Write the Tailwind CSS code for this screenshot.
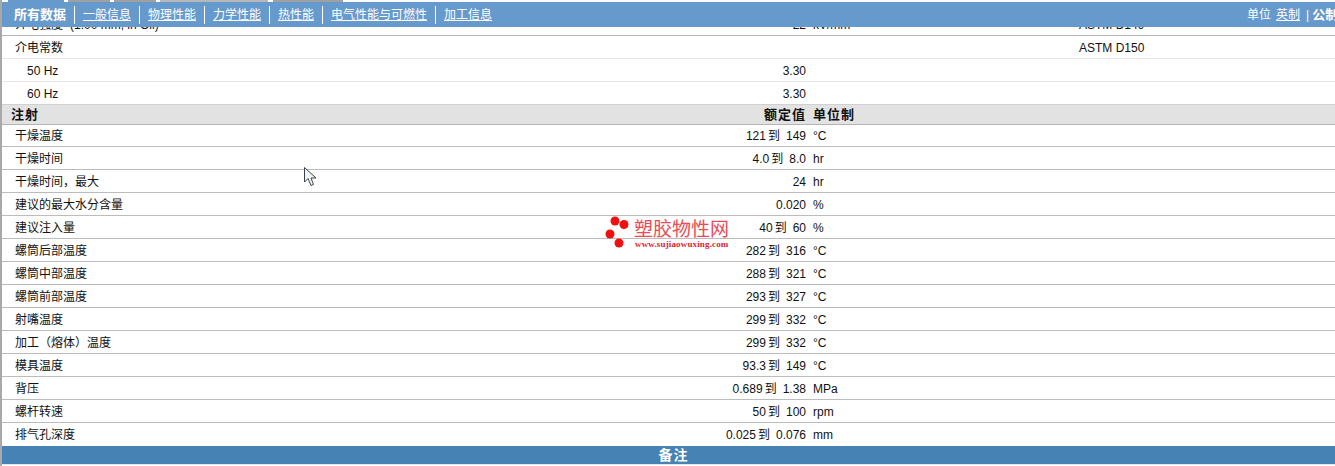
<!DOCTYPE html>
<html lang="zh">
<head>
  <meta charset="UTF-8">
  <title>塑胶物性</title>
  <script src="https://cdn.jsdelivr.net/npm/@tailwindcss/browser@4"></script>
</head>
<body class="h-[466px] w-[1335px] overflow-hidden bg-white text-[12px] text-[#111] font-['Liberation_Sans','Noto_Sans_CJK_SC',sans-serif]">
  <div class="relative h-[466px] overflow-hidden border-l-2 border-[#a8a8a8]">
    <!-- 顶部导航 -->
    <div class="h-[2px] flex -ml-[2px] pl-[8px] bg-white">
      <div class="w-[56px] bg-[#6699cc]"></div>
      <div class="w-[42px] ml-[4px] bg-[#a0a0a0]"></div>
      <div class="w-[42px] ml-[4px] bg-[#a0a0a0]"></div>
      <div class="w-[108px] ml-[4px] bg-[#b8b8b8]"></div>
      <div class="w-[70px] ml-[5px] bg-[#a0a0a0]"></div>
    </div>
    <div class="h-[25px] -ml-[2px] bg-[#6699cc] text-white flex items-center justify-between relative z-10">
      <nav class="flex items-center pl-[14px]">
        <span class="font-bold text-[13px] pr-[8px]">所有数据</span>
        <a class="border-l border-white px-[8px] underline">一般信息</a>
        <a class="border-l border-white px-[8px] underline">物理性能</a>
        <a class="border-l border-white px-[8px] underline">力学性能</a>
        <a class="border-l border-white px-[8px] underline">热性能</a>
        <a class="border-l border-white px-[8px] underline">电气性能与可燃性</a>
        <a class="border-l border-white px-[8px] underline">加工信息</a>
      </nav>
      <div class="flex items-center whitespace-nowrap w-[88px] overflow-hidden shrink-0">
        <span>单位</span><a class="underline ml-[5px]">英制</a><span class="ml-[6px]">|</span><b class="ml-[3px] text-[13px]">公制</b>
      </div>
    </div>

    <!-- 上一节（被导航遮住） -->
    <div class="h-[9px] overflow-hidden border-b border-[#b4b4b4] relative">
      <div class="grid grid-cols-[560px_244px_273px_1fr] absolute left-0 right-0 -top-[14px] h-[23px] items-center">
        <span class="pl-[13px]">介电强度<span class="ml-[7px]">(1.00 mm, in Oil)</span></span><span class="text-right">22</span><span class="pl-[7px]">kV/mm</span><span>ASTM D149</span>
      </div>
    </div>

    <div class="grid grid-cols-[560px_244px_273px_1fr] h-[23px] pt-[1px] items-center border-b border-[#e8e8e8]">
      <span class="pl-[13px]">介电常数</span><span></span><span></span><span>ASTM D150</span>
    </div>
    <div class="grid grid-cols-[560px_244px_273px_1fr] h-[23px] pt-[1px] items-center border-b border-[#e8e8e8]">
      <span class="pl-[25px]">50 Hz</span><span class="text-right">3.30</span>
    </div>
    <div class="grid grid-cols-[560px_244px_273px_1fr] h-[23px] pt-[1px] items-center border-b border-[#d0d0d0]">
      <span class="pl-[25px]">60 Hz</span><span class="text-right">3.30</span>
    </div>

    <!-- 注射 -->
    <div class="grid grid-cols-[560px_244px_273px_1fr] h-[20px] items-center bg-[#e2e2e2] border-b border-[#b4b4b4] font-bold text-[13px] tracking-[1px]">
      <span class="pl-[9px]">注射</span><span class="text-right whitespace-nowrap">额定值</span><span class="pl-[7px]">单位制</span>
    </div>

    <div class="divide-y divide-[#bcbcbc]">
      <div class="grid grid-cols-[560px_244px_1fr] h-[22px] items-center"><span class="pl-[13px]">干燥温度</span><span class="text-right">121<span class="ml-[2px] mr-[6px]">到</span>149</span><span class="pl-[7px]">°C</span></div>
      <div class="grid grid-cols-[560px_244px_1fr] h-[23px] pt-[1px] items-center"><span class="pl-[13px]">干燥时间</span><span class="text-right">4.0<span class="ml-[2px] mr-[6px]">到</span>8.0</span><span class="pl-[7px]">hr</span></div>
      <div class="grid grid-cols-[560px_244px_1fr] h-[23px] pt-[1px] items-center"><span class="pl-[13px]">干燥时间，最大</span><span class="text-right">24</span><span class="pl-[7px]">hr</span></div>
      <div class="grid grid-cols-[560px_244px_1fr] h-[23px] pt-[1px] items-center"><span class="pl-[13px]">建议的最大水分含量</span><span class="text-right">0.020</span><span class="pl-[7px]">%</span></div>
      <div class="grid grid-cols-[560px_244px_1fr] h-[23px] pt-[1px] items-center"><span class="pl-[13px]">建议注入量</span><span class="text-right">40<span class="ml-[2px] mr-[6px]">到</span>60</span><span class="pl-[7px]">%</span></div>
      <div class="grid grid-cols-[560px_244px_1fr] h-[23px] pt-[1px] items-center"><span class="pl-[13px]">螺筒后部温度</span><span class="text-right">282<span class="ml-[2px] mr-[6px]">到</span>316</span><span class="pl-[7px]">°C</span></div>
      <div class="grid grid-cols-[560px_244px_1fr] h-[23px] pt-[1px] items-center"><span class="pl-[13px]">螺筒中部温度</span><span class="text-right">288<span class="ml-[2px] mr-[6px]">到</span>321</span><span class="pl-[7px]">°C</span></div>
      <div class="grid grid-cols-[560px_244px_1fr] h-[23px] pt-[1px] items-center"><span class="pl-[13px]">螺筒前部温度</span><span class="text-right">293<span class="ml-[2px] mr-[6px]">到</span>327</span><span class="pl-[7px]">°C</span></div>
      <div class="grid grid-cols-[560px_244px_1fr] h-[23px] pt-[1px] items-center"><span class="pl-[13px]">射嘴温度</span><span class="text-right">299<span class="ml-[2px] mr-[6px]">到</span>332</span><span class="pl-[7px]">°C</span></div>
      <div class="grid grid-cols-[560px_244px_1fr] h-[23px] pt-[1px] items-center"><span class="pl-[13px]">加工（熔体）温度</span><span class="text-right">299<span class="ml-[2px] mr-[6px]">到</span>332</span><span class="pl-[7px]">°C</span></div>
      <div class="grid grid-cols-[560px_244px_1fr] h-[23px] pt-[1px] items-center"><span class="pl-[13px]">模具温度</span><span class="text-right">93.3<span class="ml-[2px] mr-[6px]">到</span>149</span><span class="pl-[7px]">°C</span></div>
      <div class="grid grid-cols-[560px_244px_1fr] h-[23px] pt-[1px] items-center"><span class="pl-[13px]">背压</span><span class="text-right">0.689<span class="ml-[2px] mr-[6px]">到</span>1.38</span><span class="pl-[7px]">MPa</span></div>
      <div class="grid grid-cols-[560px_244px_1fr] h-[23px] pt-[1px] items-center"><span class="pl-[13px]">螺杆转速</span><span class="text-right">50<span class="ml-[2px] mr-[6px]">到</span>100</span><span class="pl-[7px]">rpm</span></div>
      <div class="grid grid-cols-[560px_244px_1fr] h-[23px] pt-[1px] items-center"><span class="pl-[13px]">排气孔深度</span><span class="text-right">0.025<span class="ml-[2px] mr-[6px]">到</span>0.076</span><span class="pl-[7px]">mm</span></div>
    </div>

    <div class="h-[18px] pl-[10px] bg-[#4682b4] text-white font-bold text-[14px] tracking-[1px] flex items-center justify-center">备注</div>
    <div class="h-[1px] bg-[#e8e8e8]"></div>

    <!-- 水印 -->
    <div class="absolute left-[603px] top-[215px] w-[130px] h-[36px]">
      <svg class="absolute left-0 top-0" width="30" height="36" viewBox="0 0 30 36">
        <circle cx="10" cy="6" r="4.5" fill="#f01010"/><circle cx="19" cy="9.5" r="4.5" fill="#f01010"/><circle cx="5" cy="19" r="4.5" fill="#f01010"/><circle cx="14" cy="28" r="4.5" fill="#f01010"/>
      </svg>
      <span class="absolute left-[29px] top-[4px] text-[19px] leading-[22px] text-[#ee4a55] whitespace-nowrap">塑胶物性网</span>
      <span class="absolute left-[30px] top-[24px] text-[9px] tracking-[0.15px] leading-[10px] text-[#e02030] font-bold whitespace-nowrap font-['Liberation_Serif',serif]">www.sujiaowuxing.com</span>
    </div>

    <!-- 鼠标指针 -->
    <svg class="absolute left-[301px] top-[167px]" width="16" height="21" viewBox="0 0 16 21">
      <path d="M1.5 .5 V15 L5 11.5 L8 18.5 L10.5 17.5 L8 11 H13 Z" fill="#f4f4f4" stroke="#3a4050" stroke-width="1"/>
    </svg>
  </div>
</body>
</html>
